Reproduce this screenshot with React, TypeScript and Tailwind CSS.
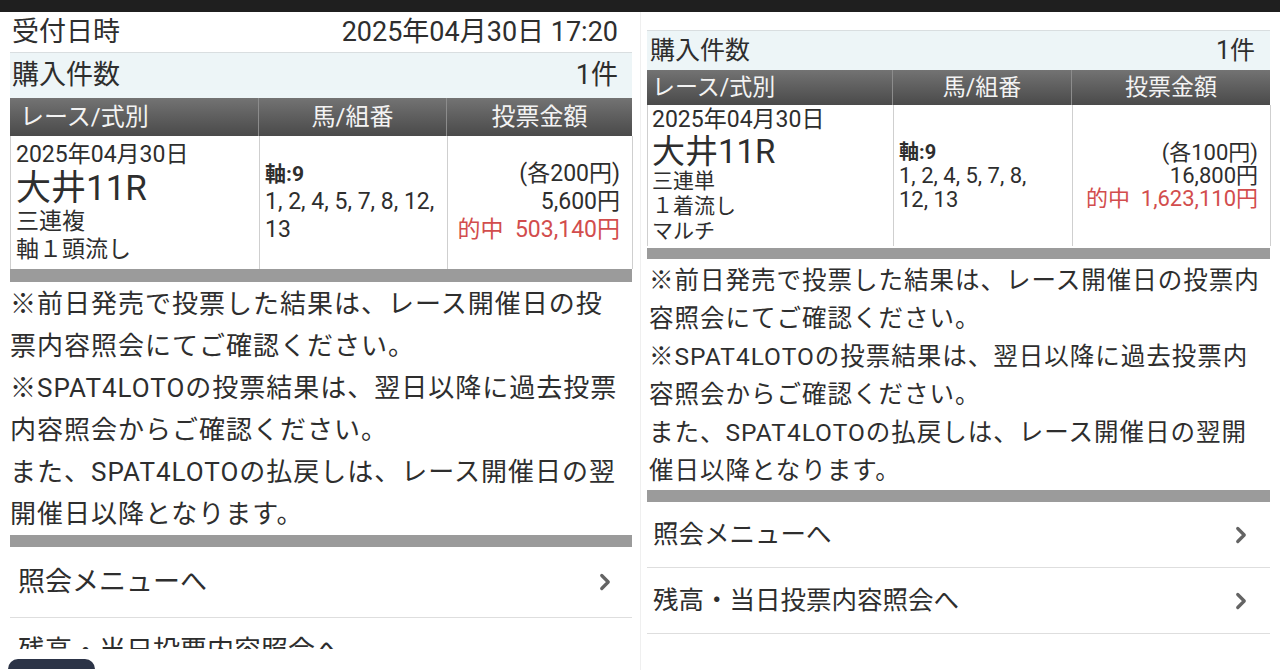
import React from 'react';
import { ChevronRight } from 'lucide-react';

const FONT = "font-['Roboto','Noto_Sans_CJK_JP',sans-serif]";

const Chevron: React.FC = () => (
  <ChevronRight size={26} strokeWidth={3} className="text-[#646464] shrink-0" />
);

const LeftPanel: React.FC = () => (
  <div className="w-[640px] shrink-0 flex flex-col pl-[10px] pr-[8px] text-[#2e2e2e]">
    <div className="h-[41px] flex items-center justify-between px-[2px] text-[27px] leading-none border-b border-[#d9dee0]">
      <span>受付日時</span>
      <span className="pr-[12px]">2025年04月30日 17:20</span>
    </div>
    <div className="h-[45px] flex items-center justify-between px-[2px] bg-[#edf5f7] text-[27px] leading-none">
      <span>購入件数</span>
      <span className="pr-[12px]">1件</span>
    </div>
    <div className="grid grid-cols-[249px_188px_185px] h-[38px] bg-gradient-to-b from-[#737373] to-[#4a4a4a] text-[#f3f3f3] text-[24px] leading-none">
      <div className="flex items-center pl-[10px] border-r border-[#8c8c8c]">レース/式別</div>
      <div className="flex items-center justify-center border-r border-[#8c8c8c]">馬/組番</div>
      <div className="flex items-center justify-center">投票金額</div>
    </div>
    <div className="grid grid-cols-[249px_188px_185px] h-[133px] border-l border-[#cfcfcf]">
      <div className="border-r border-[#cfcfcf] pl-[5px] pt-[6px] flex flex-col">
        <span className="text-[23px] leading-[26px]">2025年04月30日</span>
        <span className="text-[35px] leading-[36px] mt-[3px]">大井11R</span>
        <span className="text-[23px] leading-[28px] mt-[1px]">三連複</span>
        <span className="text-[23px] leading-[28px]">軸１頭流し</span>
      </div>
      <div className="border-r border-[#cfcfcf] pl-[5px] pt-[24px] flex flex-col text-[23px] leading-[28px]">
        <span className="font-bold text-[21px]">軸:9</span>
        <span className="whitespace-nowrap">1, 2, 4, 5, 7, 8, 12,</span>
        <span>13</span>
      </div>
      <div className="border-r border-[#cfcfcf] pr-[12px] pt-[24px] flex flex-col items-end text-[23px] leading-[28px]">
        <span>(各200円)</span>
        <span>5,600円</span>
        <span className="text-[#d24d4d] whitespace-nowrap">的中&nbsp;&nbsp;503,140円</span>
      </div>
    </div>
    <div className="h-[13px] bg-[#9b9b9b]" />
    <div className="h-[253px] pt-[1px] text-[26px] leading-[42px] tracking-[1px] whitespace-nowrap">
      <div>※前日発売で投票した結果は、レース開催日の投</div>
      <div>票内容照会にてご確認ください。</div>
      <div>※SPAT4LOTOの投票結果は、翌日以降に過去投票</div>
      <div>内容照会からご確認ください。</div>
      <div>また、SPAT4LOTOの払戻しは、レース開催日の翌</div>
      <div>開催日以降となります。</div>
    </div>
    <div className="h-[12px] bg-[#9b9b9b]" />
    <div className="h-[71px] flex items-center justify-between pl-[8px] pr-[14px] border-b border-[#dedede] text-[27px] leading-none">
      <span>照会メニューへ</span>
      <Chevron />
    </div>
    <div className="h-[31px] overflow-hidden pl-[8px] pt-[20px] text-[27px] leading-[27px] whitespace-nowrap">
      残高・当日投票内容照会へ
    </div>
    <div className="h-[10px]" />
    <div className="h-[10px] w-[87px] -ml-[2px] rounded-t-[10px] bg-[#2c3447]" />
  </div>
);

const RightPanel: React.FC = () => (
  <div className="w-[640px] min-w-0 shrink-0 flex flex-col pl-[6px] pr-[10px] border-l border-[#efefef] text-[#2e2e2e]">
    <div className="h-[19px] border-b border-[#d9dee0]" />
    <div className="h-[39px] flex items-center justify-between pl-[3px] pr-[15px] bg-[#edf5f7] text-[25px] leading-none">
      <span>購入件数</span>
      <span>1件</span>
    </div>
    <div className="grid grid-cols-[246px_179px_198px] h-[35px] bg-gradient-to-b from-[#737373] to-[#4a4a4a] text-[#f3f3f3] text-[23px] leading-none">
      <div className="flex items-center pl-[5px] border-r border-[#8c8c8c]">レース/式別</div>
      <div className="flex items-center justify-center border-r border-[#8c8c8c]">馬/組番</div>
      <div className="flex items-center justify-center">投票金額</div>
    </div>
    <div className="grid grid-cols-[246px_179px_198px] h-[141px] border-l border-[#cfcfcf]">
      <div className="border-r border-[#cfcfcf] pl-[4px] pt-[3px] flex flex-col">
        <span className="text-[23px] leading-[24px]">2025年04月30日</span>
        <span className="text-[33px] leading-[34px] mt-[3px]">大井11R</span>
        <span className="text-[21px] leading-[25px]">三連単</span>
        <span className="text-[21px] leading-[25px]">１着流し</span>
        <span className="text-[21px] leading-[25px]">マルチ</span>
      </div>
      <div className="border-r border-[#cfcfcf] pl-[5px] pt-[35px] flex flex-col text-[22px] leading-[24px]">
        <span className="font-bold text-[20px]">軸:9</span>
        <span className="whitespace-nowrap">1, 2, 4, 5, 7, 8,</span>
        <span>12, 13</span>
      </div>
      <div className="border-r border-[#cfcfcf] pr-[12px] pt-[36px] flex flex-col items-end text-[22px] leading-[23px]">
        <span>(各100円)</span>
        <span>16,800円</span>
        <span className="text-[#d24d4d] whitespace-nowrap">的中&nbsp;&nbsp;1,623,110円</span>
      </div>
    </div>
    <div className="h-[2px]" />
    <div className="h-[11px] bg-[#9b9b9b]" />
    <div className="h-[231px] pt-[3px] pl-[2px] text-[24.5px] leading-[38px] tracking-[1px] whitespace-nowrap">
      <div>※前日発売で投票した結果は、レース開催日の投票内</div>
      <div>容照会にてご確認ください。</div>
      <div>※SPAT4LOTOの投票結果は、翌日以降に過去投票内</div>
      <div>容照会からご確認ください。</div>
      <div>また、SPAT4LOTOの払戻しは、レース開催日の翌開</div>
      <div>催日以降となります。</div>
    </div>
    <div className="h-[12px] bg-[#9b9b9b]" />
    <div className="h-[66px] flex items-center justify-between pl-[6px] pr-[16px] border-b border-[#dedede] text-[25.5px] leading-none">
      <span>照会メニューへ</span>
      <Chevron />
    </div>
    <div className="h-[66px] flex items-center justify-between pl-[6px] pr-[16px] border-b border-[#dedede] text-[25.5px] leading-none">
      <span>残高・当日投票内容照会へ</span>
      <Chevron />
    </div>
  </div>
);

export default function App() {
  return (
    <div className={`w-[1280px] h-[670px] overflow-hidden bg-white flex flex-col ${FONT}`}>
      <div className="h-[12px] bg-[#1f1f1f] shrink-0" />
      <div className="flex flex-1 min-h-0">
        <LeftPanel />
        <RightPanel />
      </div>
    </div>
  );
}
